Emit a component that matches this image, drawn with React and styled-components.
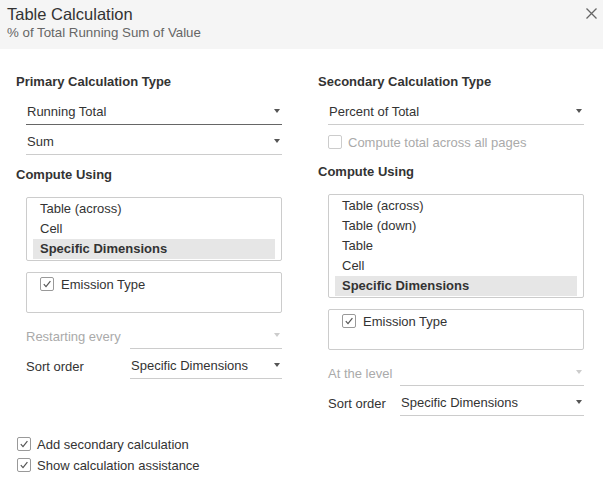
import React from 'react'
import styled, { createGlobalStyle } from 'styled-components'

const Global = createGlobalStyle`
    body {
        margin : 0;
        background : #ffffff;
        font-family : "Liberation Sans", Arial, sans-serif;
        color : #333333;
    }
`;

const Dialog = styled.div`
    width : 603px;
    height : 483px;
    background : #ffffff;
    display : flex;
    flex-direction : column;
`;
const Header = styled.div`
    height : 49px;
    box-sizing : border-box;
    background : #f5f5f5;
    padding : 5px 7px 0px 7px;
    position : relative;
`;
const Title = styled.div`
    font-size : 16.5px;
    line-height : 18px;
    color : #333333;
`;
const Subtitle = styled.div`
    font-size : 13.3px;
    line-height : 16px;
    margin-top : 2px;
    color : #666666;
`;
const Close = styled.button`
    position : absolute;
    top : 7px;
    right : 5px;
    width : 13px;
    height : 13px;
    padding : 0;
    border : none;
    background : none;
    display : flex;
    cursor : pointer;
`;
const Columns = styled.div`
    display : grid;
    grid-template-columns : 266px 266px;
    column-gap : 36px;
    align-items : start;
    padding : 25px 0px 0px 16px;
`;
const Column = styled.div`
    display : flex;
    flex-direction : column;
`;
const Heading = styled.div`
    font-size : 13px;
    font-weight : 700;
    line-height : 16px;
    color : #333333;
    margin-top : ${p => p.$top || 0}px;
`;
const Indented = styled.div`
    margin-left : 10px;
    display : flex;
    flex-direction : column;
    margin-top : ${p => p.$top || 0}px;
`;
const Select = styled.div`
    flex : 1 0 auto;
    height : 26px;
    box-sizing : border-box;
    display : flex;
    align-items : center;
    justify-content : space-between;
    padding : 0px 2px 0px 1px;
    border-bottom : 1px solid ${p => p.$focus ? '#666666' : '#cccccc'};
    font-size : 13px;
    color : #333333;
    margin-top : ${p => p.$top || 0}px;
`;
const Arrow = styled.span`
    width : 0;
    height : 0;
    border-left : 3.5px solid transparent;
    border-right : 3.5px solid transparent;
    border-top : 4px solid ${p => p.$disabled ? '#cccccc' : '#555555'};
    margin-bottom : 1px;
`;
const List = styled.div`
    border : 1px solid #cccccc;
    border-radius : 2px;
    padding : 1px 6px 1px 6px;
    display : flex;
    flex-direction : column;
`;
const Item = styled.div`
    height : 20px;
    line-height : 20px;
    padding-left : 7px;
    font-size : 13px;
    font-weight : ${p => p.$selected ? 700 : 400};
    background : ${p => p.$selected ? '#e6e6e6' : 'transparent'};
    color : #333333;
`;
const FieldBox = styled.div`
    height : 41px;
    box-sizing : border-box;
    border : 1px solid #cccccc;
    border-radius : 2px;
    padding : 3px 13px;
    margin-top : 11px;
`;
const CheckRow = styled.label`
    display : flex;
    align-items : center;
    gap : ${p => p.$gap || 7}px;
    height : ${p => p.$h || 16}px;
    font-size : 13px;
    color : ${p => p.$disabled ? '#aaaaaa' : '#333333'};
    margin-top : ${p => p.$top || 0}px;
`;
const Box = styled.span`
    width : 14px;
    height : 14px;
    box-sizing : border-box;
    border : 1px solid ${p => p.$disabled ? '#cccccc' : '#999999'};
    border-radius : 2px;
    display : flex;
    align-items : center;
    justify-content : center;
    flex-shrink : 0;
`;
const FieldRow = styled.div`
    display : flex;
    align-items : stretch;
    margin-top : ${p => p.$top || 0}px;
`;
const FieldLabel = styled.div`
    width : ${p => p.$w}px;
    flex-shrink : 0;
    display : flex;
    align-items : center;
    font-size : 13px;
    color : ${p => p.$disabled ? '#aaaaaa' : '#333333'};
`;
const Footer = styled.div`
    padding : 0px 0px 0px 17px;
    margin-top : 20px;
    display : flex;
    flex-direction : column;
    gap : 5px;
`;

const Check = ({ checked, disabled }) => (
  <Box $disabled={disabled}>
    {checked && (
      <svg width="10" height="10" viewBox="0 0 10 10">
        <path d="M1.8 5.2 L4 7.6 L8.4 2.2" fill="none" stroke="#555555" strokeWidth="1.2" />
      </svg>
    )}
  </Box>
);

const Dropdown = ({ value, focus, disabled, top }) => (
  <Select $focus={focus} $top={top}>
    <span>{value}</span>
    <Arrow $disabled={disabled} />
  </Select>
);

const App = () => {
  const leftItems = ["Table (across)", "Cell", "Specific Dimensions"];
  const rightItems = ["Table (across)", "Table (down)", "Table", "Cell", "Specific Dimensions"];
  return (
    <Dialog>
      <Global />
      <Header>
        <Title>Table Calculation</Title>
        <Subtitle>% of Total Running Sum of Value</Subtitle>
        <Close aria-label="Close">
          <svg width="13" height="13" viewBox="0 0 13 13">
            <path d="M1.5 1.5 L11.5 11.5 M11.5 1.5 L1.5 11.5" stroke="#666666" strokeWidth="1.3" />
          </svg>
        </Close>
      </Header>
      <Columns>
        <Column>
          <Heading>Primary Calculation Type</Heading>
          <Indented $top={9}>
            <Dropdown value="Running Total" focus />
            <Dropdown value="Sum" top={4} />
          </Indented>
          <Heading $top={12}>Compute Using</Heading>
          <Indented $top={14}>
            <List>
              {leftItems.map(i => (
                <Item key={i} $selected={i === "Specific Dimensions"}>{i}</Item>
              ))}
            </List>
            <FieldBox>
              <CheckRow $gap={7}><Check checked />Emission Type</CheckRow>
            </FieldBox>
            <FieldRow $top={10}>
              <FieldLabel $w={104} $disabled>Restarting every</FieldLabel>
              <Dropdown value="" disabled />
            </FieldRow>
            <FieldRow $top={4}>
              <FieldLabel $w={104}>Sort order</FieldLabel>
              <Dropdown value="Specific Dimensions" />
            </FieldRow>
          </Indented>
        </Column>
        <Column>
          <Heading>Secondary Calculation Type</Heading>
          <Indented $top={9}>
            <Dropdown value="Percent of Total" />
            <CheckRow $disabled $gap={6} $h={20} $top={7}><Check disabled />Compute total across all pages</CheckRow>
          </Indented>
          <Heading $top={12}>Compute Using</Heading>
          <Indented $top={14}>
            <List>
              {rightItems.map(i => (
                <Item key={i} $selected={i === "Specific Dimensions"}>{i}</Item>
              ))}
            </List>
            <FieldBox>
              <CheckRow $gap={7}><Check checked />Emission Type</CheckRow>
            </FieldBox>
            <FieldRow $top={10}>
              <FieldLabel $w={72} $disabled>At the level</FieldLabel>
              <Dropdown value="" disabled />
            </FieldRow>
            <FieldRow $top={4}>
              <FieldLabel $w={72}>Sort order</FieldLabel>
              <Dropdown value="Specific Dimensions" />
            </FieldRow>
          </Indented>
        </Column>
      </Columns>
      <Footer>
        <CheckRow $gap={6}><Check checked />Add secondary calculation</CheckRow>
        <CheckRow $gap={6}><Check checked />Show calculation assistance</CheckRow>
      </Footer>
    </Dialog>
  )
}

export default App
